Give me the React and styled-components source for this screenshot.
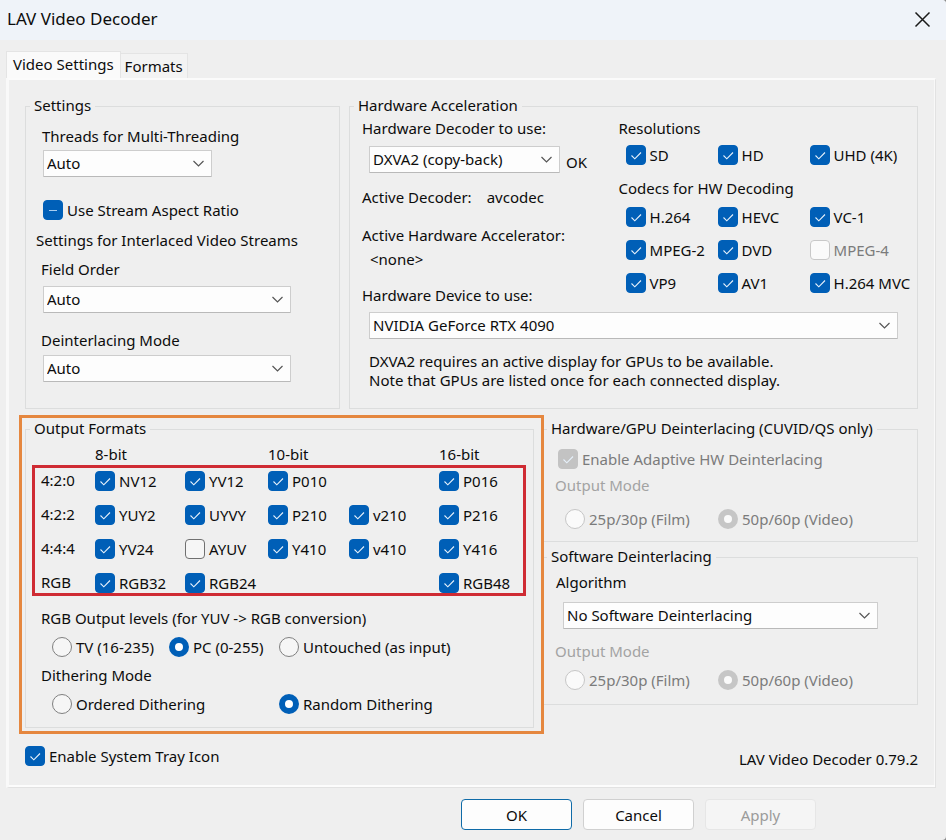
import React, { useEffect, useId, useRef } from "react";
import styled, { createGlobalStyle, css } from "styled-components";

const GlobalStyle = createGlobalStyle`
  *, *::before, *::after { box-sizing: border-box; }
  html { background: #8a8a8a; }
  body {
    margin: 0;
    color: #0c0c0c;
    font: 15px/20px "Noto Sans", "Open Sans", sans-serif;
  }
  button, input, select, fieldset, legend { font: inherit; color: inherit; margin: 0; }
`;

const Window = styled.main`
  display: flex;
  flex-direction: column;
  min-height: 100vh;
  background: #efefef;
  border-radius: 0 4px 4px 0;
  overflow: hidden;
`;

const TitleBar = styled.header`
  display: flex;
  align-items: center;
  justify-content: space-between;
  height: 40px;
  padding: 0 10px 2px 7px;
  background: #eff3f9;
`;

const Title = styled.h1`
  margin: 0;
  font-size: 17px;
  line-height: 24px;
  font-weight: 400;
`;

const CloseButton = styled.button`
  display: flex;
  padding: 5px;
  border: 0;
  background: none;
`;

const TabList = styled.div`
  display: flex;
  align-items: flex-end;
  margin: 11px 0 0 6px;
`;

const Tab = styled.button`
  height: 25px;
  padding: 0 4px;
  border: 1px solid #e4e4e4;
  border-width: 1px 1px 0 0;
  background: #f3f3f3;
  white-space: nowrap;

  &[aria-selected="true"] {
    height: 27px;
    padding: 0 6px 2px;
    border-left-width: 1px;
    background: #fafafa;
  }
`;

const Panel = styled.section`
  margin: 0 10px 0 6px;
  padding: 16px 17px 17px 10px;
  border: 1px solid #e2e2e2;
  border-left: 3px solid #f9f9f9;
  border-top: 2px solid #fbfbfb;
  box-shadow: inset 0 -2px #fcfcfc, inset -1px 0 #f8f8f8;
`;

const TopGrid = styled.div`
  display: grid;
  grid-template-columns: 315fr 569fr;
  gap: 9px;
  margin-left: 6px;
`;

const BottomGrid = styled.div`
  display: grid;
  grid-template-columns: 525fr 374fr;
  align-items: start;
  margin-top: 6px;
`;

const Group = styled.fieldset`
  display: block;
  min-width: 0;
  border: 1px solid #dcdddd;
  border-left-width: ${(p) => (p.$open ? 0 : "1px")};
  padding: 0 0 ${(p) => p.$bottom}px;
`;

const raisedText = css`
  padding-bottom: 2px;
  line-height: 18px;
`;

const Legend = styled.legend`
  margin-left: ${(p) => (p.$open ? 3 : 4)}px;
  padding: 0 4px;
  ${raisedText}
`;

const Line = styled.p`
  display: block;
  margin: ${(p) => p.$top || 0}px 0 0 ${(p) => p.$left || 0}px;
  ${raisedText}
  color: ${(p) => (p.$dim ? "#a3a3a3" : "inherit")};
  white-space: nowrap;
`;

const Note = styled.p`
  margin: 13px 0 0 19px;
  line-height: 19px;
`;

const SelectRow = styled.div`
  display: flex;
  align-items: center;
  gap: 6px;
  margin: ${(p) => p.$top}px ${(p) => p.$right || 0}px 0 ${(p) => p.$left}px;
`;

const SelectFrame = styled.span`
  display: grid;
  align-items: center;
  width: 100%;
  max-width: ${(p) => (p.$width ? `${p.$width}px` : "none")};

  > * { grid-area: 1 / 1; }
  > svg { justify-self: end; margin-right: 7px; pointer-events: none; }
`;

const NativeSelect = styled.select`
  appearance: none;
  width: 100%;
  height: 27px;
  padding: 0 24px 2px 3px;
  border: 1px solid #cdcdcd;
  border-bottom-color: #b9b9b9;
  border-radius: 1px;
  background: #fdfdfd;
`;

const Choice = styled.label`
  display: flex;
  align-items: center;
  gap: 4px;
  height: 20px;
  color: ${(p) => (p.$disabled ? "#7b7b7b" : "inherit")};
  white-space: nowrap;
  grid-column: ${(p) => p.$column || "auto"};
`;

const Mark = styled.span`
  display: grid;
  place-items: center;
  flex: none;
  width: 20px;
  height: 20px;

  > * { grid-area: 1 / 1; }
  > svg { pointer-events: none; }
`;

const CheckInput = styled.input`
  appearance: none;
  width: 20px;
  height: 20px;
  border: 1px solid #707070;
  border-radius: 4px;
  background: #f6f6f6;

  &:checked, &:indeterminate { border-color: #005fb7; background: #005fb7; }
  &:disabled { border-color: #c8c8c8; background: #fafafa; }
  &:disabled:checked { border-color: #c3c3c3; background: #c3c3c3; }
`;

const RadioInput = styled.input`
  appearance: none;
  width: 20px;
  height: 20px;
  border: 1px solid #808080;
  border-radius: 50%;
  background: #f6f6f6;

  &:checked { border: 6px solid #005fb7; background: #fff; }
  &:disabled { border-color: #c6c6c6; background: #fafafa; }
`;

const ChoiceGrid = styled.div`
  display: grid;
  grid-template-columns: ${(p) => p.$columns};
  row-gap: 13px;
  margin: ${(p) => p.$top}px 0 0 ${(p) => p.$left}px;
`;

const HardwareColumns = styled.div`
  display: grid;
  grid-template-columns: 257fr 299fr;
  margin-left: 12px;
`;

const StatusLine = styled(Line)`
  display: flex;
  gap: 15px;
`;

const OrangeHighlight = styled.div`
  padding: 1px 7px 3px 3px;
  border: 3px solid #e5873f;
`;

const formatColumns = "54px 90px 83px 81px 90px auto";

const FormatHeader = styled.div`
  display: grid;
  grid-template-columns: ${formatColumns};
  margin: 6px 0 0 15px;
`;

const HeaderCell = styled.span`
  grid-column: ${(p) => p.$column};
  ${raisedText}
`;

const RedHighlight = styled.div`
  display: grid;
  grid-template-columns: ${formatColumns};
  row-gap: 14px;
  margin: 0 7px 0 6px;
  padding: 3px 0 0 6px;
  border: 3px solid #cf2b33;
`;

const RowName = styled.span`
  grid-column: 1;
  ${raisedText}
`;

const Stack = styled.div`
  display: grid;
  gap: 5px;
  padding-top: 4px;
`;

const PanelFooter = styled.div`
  display: flex;
  justify-content: space-between;
  align-items: flex-start;
  margin: 12px 0 0 6px;
`;

const Actions = styled.footer`
  display: flex;
  justify-content: flex-end;
  gap: 11px;
  padding: 11px 130px 10px 0;
`;

const ActionButton = styled.button`
  width: 111px;
  height: 31px;
  padding: 0;
  border: 1px solid ${(p) => (p.$primary ? "#0f6ba8" : "#d0d0d0")};
  border-radius: 4px;
  background: #fdfdfd;

  &:disabled { border-color: #e6e6e6; background: #f5f5f5; color: #9b9b9b; }
`;

function Combo({ id, value, width }) {
  return (
    <SelectFrame $width={width}>
      <NativeSelect id={id} defaultValue={value}>
        <option>{value}</option>
      </NativeSelect>
      <svg width="13" height="9" viewBox="0 0 13 9" fill="none" stroke="#555" strokeWidth="1.2" aria-hidden="true">
        <path d="M1.5 2 6.5 7 11.5 2" />
      </svg>
    </SelectFrame>
  );
}

function LabeledCombo({ label, value, width, labelTop, labelLeft, top, left, right, note }) {
  const id = useId();
  return (
    <>
      <Line as="label" htmlFor={id} $top={labelTop} $left={labelLeft}>{label}</Line>
      <SelectRow $top={top} $left={left} $right={right}>
        <Combo id={id} value={value} width={width} />
        {note && <Line $top={6}>{note}</Line>}
      </SelectRow>
    </>
  );
}

function Check({ label, checked = true, mixed = false, disabled = false, column }) {
  const ref = useRef(null);
  useEffect(() => {
    ref.current.indeterminate = mixed;
  }, [mixed]);
  return (
    <Choice $disabled={disabled} $column={column}>
      <Mark>
        <CheckInput ref={ref} type="checkbox" defaultChecked={checked && !mixed} disabled={disabled} />
        {(checked || mixed) && (
          <svg width="20" height="20" viewBox="0 0 20 20" fill="none" aria-hidden="true">
            {mixed ? (
              <path d="M6 10.5h8" stroke="#a9cdf0" strokeWidth="1" />
            ) : (
              <path d="M5.5 10.5 8.8 13.8 15 7.5" stroke="#e6f1fb" strokeWidth="1.1" />
            )}
          </svg>
        )}
      </Mark>
      {label}
    </Choice>
  );
}

function Radio({ label, name, checked = false, disabled = false }) {
  return (
    <Choice $disabled={disabled}>
      <Mark>
        <RadioInput type="radio" name={name} defaultChecked={checked} disabled={disabled} />
      </Mark>
      {label}
    </Choice>
  );
}

const formatRows = [
  ["4:2:0", [[2, "NV12"], [3, "YV12"], [4, "P010"], [6, "P016"]]],
  ["4:2:2", [[2, "YUY2"], [3, "UYVY"], [4, "P210"], [5, "v210"], [6, "P216"]]],
  ["4:4:4", [[2, "YV24"], [3, "AYUV", false], [4, "Y410"], [5, "v410"], [6, "Y416"]]],
  ["RGB", [[2, "RGB32"], [3, "RGB24"], [6, "RGB48"]]],
];

function OutputModes({ name, top }) {
  return (
    <ChoiceGrid $columns="153px auto" $top={top} $left={21}>
      <Radio name={name} label="25p/30p (Film)" disabled />
      <Radio name={name} label="50p/60p (Video)" checked disabled />
    </ChoiceGrid>
  );
}

export default function App() {
  return (
    <>
      <GlobalStyle />
      <Window>
        <TitleBar>
          <Title>LAV Video Decoder</Title>
          <CloseButton aria-label="Close">
            <svg width="17" height="17" viewBox="0 0 17 17" stroke="#1a1a1a" strokeWidth="1.5" aria-hidden="true">
              <path d="M1.5 1.5 15.5 15.5M15.5 1.5 1.5 15.5" />
            </svg>
          </CloseButton>
        </TitleBar>

        <TabList role="tablist">
          <Tab role="tab" aria-selected="true">Video Settings</Tab>
          <Tab role="tab" aria-selected="false">Formats</Tab>
        </TabList>

        <Panel role="tabpanel" aria-label="Video Settings">
          <TopGrid>
            <Group $bottom={26}>
              <Legend>Settings</Legend>
              <LabeledCombo label="Threads for Multi-Threading" value="Auto" width={169} labelTop={11} labelLeft={16} top={3} left={17} />
              <ChoiceGrid $columns="auto" $top={23} $left={17}>
                <Check label="Use Stream Aspect Ratio" mixed />
              </ChoiceGrid>
              <Line $top={11} $left={10}>Settings for Interlaced Video Streams</Line>
              <LabeledCombo label="Field Order" value="Auto" width={248} labelTop={9} labelLeft={15} top={6} left={17} />
              <LabeledCombo label="Deinterlacing Mode" value="Auto" width={248} labelTop={18} labelLeft={15} top={4} left={17} />
            </Group>

            <Group $bottom={17}>
              <Legend>Hardware Acceleration</Legend>
              <HardwareColumns>
                <div>
                  <LabeledCombo label="Hardware Decoder to use:" value="DXVA2 (copy-back)" width={191} labelTop={3} top={7} left={7} note="OK" />
                  <StatusLine $top={15}><span>Active Decoder:</span><span>avcodec</span></StatusLine>
                  <Line $top={18}>Active Hardware Accelerator:</Line>
                  <Line $top={4} $left={8}>&lt;none&gt;</Line>
                </div>
                <div>
                  <Line $top={3}>Resolutions</Line>
                  <ChoiceGrid $columns="92px 92px auto" $top={6} $left={7}>
                    <Check label="SD" />
                    <Check label="HD" />
                    <Check label="UHD (4K)" />
                  </ChoiceGrid>
                  <Line $top={14}>Codecs for HW Decoding</Line>
                  <ChoiceGrid $columns="92px 92px auto" $top={8} $left={7}>
                    <Check label="H.264" />
                    <Check label="HEVC" />
                    <Check label="VC-1" />
                    <Check label="MPEG-2" />
                    <Check label="DVD" />
                    <Check label="MPEG-4" checked={false} disabled />
                    <Check label="VP9" />
                    <Check label="AV1" />
                    <Check label="H.264 MVC" />
                  </ChoiceGrid>
                </div>
              </HardwareColumns>
              <LabeledCombo label="Hardware Device to use:" value="NVIDIA GeForce RTX 4090" labelTop={-7} labelLeft={12} top={6} left={19} right={19} />
              <Note>
                DXVA2 requires an active display for GPUs to be available.
                <br />
                Note that GPUs are listed once for each connected display.
              </Note>
            </Group>
          </TopGrid>

          <BottomGrid>
            <OrangeHighlight>
              <Group $bottom={13}>
                <Legend>Output Formats</Legend>
                <FormatHeader>
                  <HeaderCell $column={2}>8-bit</HeaderCell>
                  <HeaderCell $column={4}>10-bit</HeaderCell>
                  <HeaderCell $column={6}>16-bit</HeaderCell>
                </FormatHeader>
                <RedHighlight>
                  {formatRows.map(([name, formats]) => (
                    <React.Fragment key={name}>
                      <RowName>{name}</RowName>
                      {formats.map(([column, label, on]) => (
                        <Check key={label} column={column} label={label} checked={on !== false} />
                      ))}
                    </React.Fragment>
                  ))}
                </RedHighlight>
                <Line $top={13} $left={15}>RGB Output levels (for YUV -&gt; RGB conversion)</Line>
                <ChoiceGrid $columns="117px 110px auto" $top={8} $left={26}>
                  <Radio name="levels" label="TV (16-235)" />
                  <Radio name="levels" label="PC (0-255)" checked />
                  <Radio name="levels" label="Untouched (as input)" />
                </ChoiceGrid>
                <Line $top={9} $left={15}>Dithering Mode</Line>
                <ChoiceGrid $columns="227px auto" $top={8} $left={26}>
                  <Radio name="dither" label="Ordered Dithering" />
                  <Radio name="dither" label="Random Dithering" checked />
                </ChoiceGrid>
              </Group>
            </OrangeHighlight>

            <Stack>
              <Group $bottom={12} $open>
                <Legend $open>Hardware/GPU Deinterlacing (CUVID/QS only)</Legend>
                <ChoiceGrid $columns="auto" $top={10} $left={14}>
                  <Check label="Enable Adaptive HW Deinterlacing" disabled />
                </ChoiceGrid>
                <Line $top={7} $left={11} $dim>Output Mode</Line>
                <OutputModes name="hw-output" top={13} />
              </Group>
              <Group $bottom={14} $open>
                <Legend $open>Software Deinterlacing</Legend>
                <LabeledCombo label="Algorithm" value="No Software Deinterlacing" width={315} labelTop={6} labelLeft={12} top={9} left={19} />
                <Line $top={13} $left={11} $dim>Output Mode</Line>
                <OutputModes name="sw-output" top={8} />
              </Group>
            </Stack>
          </BottomGrid>

          <PanelFooter>
            <Check label="Enable System Tray Icon" />
            <Line $top={4}>LAV Video Decoder 0.79.2</Line>
          </PanelFooter>
        </Panel>

        <Actions>
          <ActionButton $primary>OK</ActionButton>
          <ActionButton>Cancel</ActionButton>
          <ActionButton disabled>Apply</ActionButton>
        </Actions>
      </Window>
    </>
  );
}
